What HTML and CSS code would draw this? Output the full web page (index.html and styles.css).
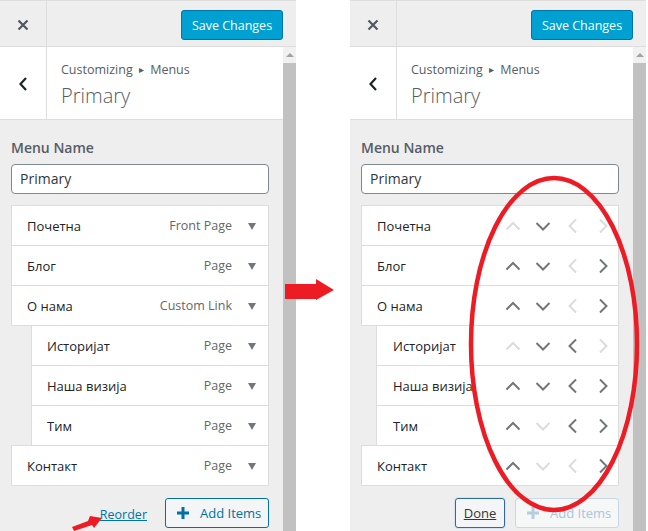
FILE: index.html
```html
<!DOCTYPE html>
<html lang="sr">
<head>
<meta charset="utf-8">
<title>Menus</title>
<link rel="stylesheet" href="styles.css">
</head>
<body>
<div class="stage">
  <section class="panel">
    <header class="topbar">
      <div class="close"><svg width="12" height="12" viewBox="0 0 12 12"><path d="M1.5 1.5 L10.5 10.5 M10.5 1.5 L1.5 10.5" stroke="#50575e" stroke-width="2.2" fill="none"/></svg></div>
      <button class="save">Save Changes</button>
    </header>
    <div class="body">
      <div class="content">
        <div class="section-head">
          <div class="back"><svg width="10" height="16" viewBox="0 0 10 16"><polyline points="8,2 2.5,8 8,14" stroke="#1d2327" stroke-width="2.2" fill="none"/></svg></div>
          <div class="titles">
            <div class="crumb">Customizing <span class="sep">▸</span> Menus</div>
            <div class="title">Primary</div>
          </div>
        </div>
        <div class="fields">
          <div class="label">Menu Name</div>
          <div class="input">Primary</div>
          <ul class="menu">
            <li class="item"><span class="item-title">Почетна</span><span class="item-type">Front Page</span><span class="toggle"></span></li>
            <li class="item"><span class="item-title">Блог</span><span class="item-type">Page</span><span class="toggle"></span></li>
            <li class="item"><span class="item-title">О нама</span><span class="item-type">Custom Link</span><span class="toggle"></span></li>
            <li class="item child"><span class="item-title">Историјат</span><span class="item-type">Page</span><span class="toggle"></span></li>
            <li class="item child"><span class="item-title">Наша визија</span><span class="item-type">Page</span><span class="toggle"></span></li>
            <li class="item child"><span class="item-title">Тим</span><span class="item-type">Page</span><span class="toggle"></span></li>
            <li class="item"><span class="item-title">Контакт</span><span class="item-type">Page</span><span class="toggle"></span></li>
          </ul>
          <div class="actions">
            <a class="reorder" href="#">Reorder</a>
            <button class="add"><svg width="14" height="14" viewBox="0 0 14 14"><path d="M7 1 V13 M1 7 H13" stroke="#0071a1" stroke-width="3" fill="none"/></svg>Add Items</button>
          </div>
        </div>
      </div>
      <div class="scrollbar"><div class="sb-up"><span class="sb-arrow"></span></div><div class="sb-thumb"></div></div>
    </div>
  </section>

  <section class="panel">
    <header class="topbar">
      <div class="close"><svg width="12" height="12" viewBox="0 0 12 12"><path d="M1.5 1.5 L10.5 10.5 M10.5 1.5 L1.5 10.5" stroke="#50575e" stroke-width="2.2" fill="none"/></svg></div>
      <button class="save">Save Changes</button>
    </header>
    <div class="body">
      <div class="content">
        <div class="section-head">
          <div class="back"><svg width="10" height="16" viewBox="0 0 10 16"><polyline points="8,2 2.5,8 8,14" stroke="#1d2327" stroke-width="2.2" fill="none"/></svg></div>
          <div class="titles">
            <div class="crumb">Customizing <span class="sep">▸</span> Menus</div>
            <div class="title">Primary</div>
          </div>
        </div>
        <div class="fields">
          <div class="label">Menu Name</div>
          <div class="input">Primary</div>
          <ul class="menu reordering">
            <li class="item"><span class="item-title">Почетна</span><span class="moves"><i class="mv up off"></i><i class="mv down"></i><i class="mv left off"></i><i class="mv right off"></i></span></li>
            <li class="item"><span class="item-title">Блог</span><span class="moves"><i class="mv up"></i><i class="mv down"></i><i class="mv left off"></i><i class="mv right"></i></span></li>
            <li class="item"><span class="item-title">О нама</span><span class="moves"><i class="mv up"></i><i class="mv down"></i><i class="mv left off"></i><i class="mv right"></i></span></li>
            <li class="item child"><span class="item-title">Историјат</span><span class="moves"><i class="mv up off"></i><i class="mv down"></i><i class="mv left"></i><i class="mv right off"></i></span></li>
            <li class="item child"><span class="item-title">Наша визија</span><span class="moves"><i class="mv up"></i><i class="mv down"></i><i class="mv left"></i><i class="mv right"></i></span></li>
            <li class="item child"><span class="item-title">Тим</span><span class="moves"><i class="mv up"></i><i class="mv down off"></i><i class="mv left"></i><i class="mv right"></i></span></li>
            <li class="item"><span class="item-title">Контакт</span><span class="moves"><i class="mv up"></i><i class="mv down off"></i><i class="mv left off"></i><i class="mv right"></i></span></li>
          </ul>
          <div class="actions tight">
            <button class="done">Done</button>
            <button class="add disabled"><svg width="14" height="14" viewBox="0 0 14 14"><path d="M7 1 V13 M1 7 H13" stroke="#b4cde0" stroke-width="3" fill="none"/></svg>Add Items</button>
          </div>
        </div>
      </div>
      <div class="scrollbar"><div class="sb-up"><span class="sb-arrow"></span></div><div class="sb-thumb"></div></div>
    </div>
  </section>

  <svg class="annot" width="648" height="531" viewBox="0 0 648 531">
    <polygon points="285,284 316,284 316,279 334,290 316,300 316,299 285,299" fill="#ed1c24"/>
    <polygon points="72,527 88,521 90,516 102,518 94,528 92,525 74,531" fill="#ed1c24"/>
    <ellipse cx="554" cy="344" rx="83" ry="166" fill="none" stroke="#ed1c24" stroke-width="4.5"/>
  </svg>
</div>
</body>
</html>
```
FILE: styles.css
```css
* { box-sizing: border-box; }

body {
  margin: 0;
  background: #fff;
  font-family: "Open Sans", "Noto Sans", sans-serif;
  font-size: 12.5px;
  color: #23282d;
}

.stage {
  position: relative;
  width: 648px;
  height: 531px;
  overflow: hidden;
  display: flex;
  gap: 54px;
}

.panel {
  flex: none;
  width: 296px;
  height: 531px;
  display: flex;
  flex-direction: column;
  background: #eee;
}

.topbar {
  flex: none;
  height: 47px;
  border-top: 1px solid #ddd;
  border-bottom: 1px solid #ddd;
  display: flex;
  align-items: flex-start;
}

.close {
  width: 47px;
  height: 45px;
  border-right: 1px solid #ddd;
  display: flex;
  align-items: center;
  justify-content: center;
  padding-top: 2px;
}

.save {
  margin: 9px 13px 0 auto;
  height: 30px;
  width: 102px;
  padding: 0;
  background: #00a0d2;
  border: 1px solid #0073aa;
  border-radius: 3px;
  color: #fff;
  font: inherit;
  font-size: 12.5px;
}

.body {
  flex: 1;
  display: flex;
  min-height: 0;
}

.content {
  flex: 1;
  display: flex;
  flex-direction: column;
}

.section-head {
  flex: none;
  height: 73px;
  background: #fff;
  border-bottom: 1px solid #ddd;
  display: flex;
}

.back {
  width: 47px;
  border-right: 1px solid #ddd;
  display: flex;
  align-items: center;
  justify-content: center;
  padding-top: 2px;
}

.titles {
  padding: 14px 0 0 14px;
  color: #555d66;
}

.crumb {
  font-size: 12.5px;
  line-height: 18px;
}

.sep {
  font-size: 10px;
  margin: 0 3px;
  position: relative;
  top: -1px;
}

.title {
  margin-top: 4px;
  font-size: 20px;
  line-height: 26px;
  font-weight: 300;
}

.fields {
  padding: 18px 14px 0 11px;
}

.label {
  font-size: 14px;
  line-height: 20px;
  font-weight: 600;
  color: #555d66;
}

.input {
  margin-top: 6px;
  height: 30px;
  border: 1px solid #7e8993;
  border-radius: 4px;
  background: #fff;
  padding: 0 8px;
  line-height: 28px;
  font-size: 14px;
  color: #32373c;
}

.menu {
  list-style: none;
  margin: 11px 0 0;
  padding: 0;
}

.item {
  height: 41px;
  margin-top: -1px;
  border: 1px solid #ddd;
  background: #fff;
  display: flex;
  align-items: center;
  padding: 0 12px 0 15px;
  position: relative;
}

.item:first-child { margin-top: 0; }

.item.child { margin-left: 20px; }

.item-title {
  font-size: 13px;
  font-weight: 400;
  color: #1d2327;
  flex: 1;
}

.item-type {
  color: #666;
  margin-right: 16px;
}

.toggle {
  width: 0;
  height: 0;
  border-left: 4.5px solid transparent;
  border-right: 4.5px solid transparent;
  border-top: 7px solid #72777c;
  margin-top: 1px;
}

.reordering .item { padding-right: 0; }
.reordering .item.child { margin-left: 15px; padding-left: 16px; }

.moves {
  display: flex;
}

.mv {
  width: 30px;
  height: 38px;
  display: block;
  background-repeat: no-repeat;
  background-position: center;
}

.mv.up    { background-image: url("data:image/svg+xml,%3Csvg xmlns='http://www.w3.org/2000/svg' width='16' height='16'%3E%3Cpolyline points='1.5,11.5 8,5 14.5,11.5' fill='none' stroke='%2372777c' stroke-width='2'/%3E%3C/svg%3E"); }
.mv.down  { background-image: url("data:image/svg+xml,%3Csvg xmlns='http://www.w3.org/2000/svg' width='16' height='16'%3E%3Cpolyline points='1.5,5 8,11.5 14.5,5' fill='none' stroke='%2372777c' stroke-width='2'/%3E%3C/svg%3E"); }
.mv.left  { background-image: url("data:image/svg+xml,%3Csvg xmlns='http://www.w3.org/2000/svg' width='16' height='16'%3E%3Cpolyline points='11,1.5 4.5,8 11,14.5' fill='none' stroke='%2372777c' stroke-width='2'/%3E%3C/svg%3E"); }
.mv.right { background-image: url("data:image/svg+xml,%3Csvg xmlns='http://www.w3.org/2000/svg' width='16' height='16'%3E%3Cpolyline points='5,1.5 11.5,8 5,14.5' fill='none' stroke='%2372777c' stroke-width='2'/%3E%3C/svg%3E"); }

.mv.up.off    { background-image: url("data:image/svg+xml,%3Csvg xmlns='http://www.w3.org/2000/svg' width='16' height='16'%3E%3Cpolyline points='1.5,11.5 8,5 14.5,11.5' fill='none' stroke='%23dcdcde' stroke-width='2'/%3E%3C/svg%3E"); }
.mv.down.off  { background-image: url("data:image/svg+xml,%3Csvg xmlns='http://www.w3.org/2000/svg' width='16' height='16'%3E%3Cpolyline points='1.5,5 8,11.5 14.5,5' fill='none' stroke='%23dcdcde' stroke-width='2'/%3E%3C/svg%3E"); }
.mv.left.off  { background-image: url("data:image/svg+xml,%3Csvg xmlns='http://www.w3.org/2000/svg' width='16' height='16'%3E%3Cpolyline points='11,1.5 4.5,8 11,14.5' fill='none' stroke='%23dcdcde' stroke-width='2'/%3E%3C/svg%3E"); }
.mv.right.off { background-image: url("data:image/svg+xml,%3Csvg xmlns='http://www.w3.org/2000/svg' width='16' height='16'%3E%3Cpolyline points='5,1.5 11.5,8 5,14.5' fill='none' stroke='%23dcdcde' stroke-width='2'/%3E%3C/svg%3E"); }

.actions {
  margin-top: 12px;
  display: flex;
  justify-content: flex-end;
  align-items: center;
  gap: 18px;
}

.actions.tight { gap: 10px; }

.reorder {
  color: #0073aa;
  text-decoration: underline;
  margin-top: 2px;
}

.add {
  height: 30px;
  width: 104px;
  display: flex;
  align-items: center;
  gap: 10px;
  padding: 0 0 0 10px;
  border: 1px solid #0071a1;
  border-radius: 3px;
  background: #f3f5f6;
  color: #0071a1;
  font: inherit;
  font-size: 13px;
}

.add.disabled {
  border-color: #c5d9e8;
  color: #a9c5da;
  background: #f6f7f7;
}

.done {
  height: 30px;
  width: 50px;
  padding: 0;
  border: 1px solid #2d6a9f;
  border-radius: 3px;
  background: #f3f5f6;
  color: #32373c;
  font: inherit;
  font-size: 13px;
  text-decoration: underline;
  box-shadow: 0 0 0 1px #d5e4f0;
  margin-top: -1px;
}

.scrollbar {
  width: 13px;
  flex: none;
  display: flex;
  flex-direction: column;
  background: #f1f1f1;
}

.sb-up {
  height: 16px;
  display: flex;
  align-items: center;
  justify-content: center;
}

.sb-arrow {
  width: 0;
  height: 0;
  border-left: 4px solid transparent;
  border-right: 4px solid transparent;
  border-bottom: 4px solid #a3a3a3;
}

.sb-thumb {
  flex: 1;
  background: #c1c1c1;
}

.annot {
  position: absolute;
  left: 0;
  top: 0;
  pointer-events: none;
}
```
